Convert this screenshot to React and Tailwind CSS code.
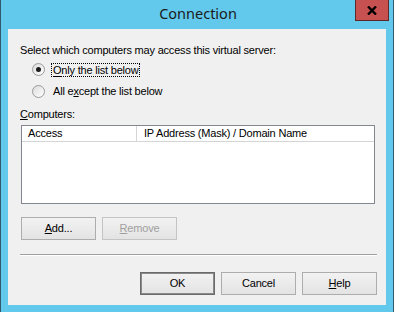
import React from 'react'

const Radio = ({ checked }) => (
  <span className="relative w-[13px] h-[13px] rounded-full border border-[#9a9a9a] bg-gradient-to-br from-[#dcdcdc] to-white shrink-0 flex items-center justify-center">
    {checked && <span className="w-[5px] h-[5px] rounded-full bg-[#1a1a1a]" />}
  </span>
)

const Btn = ({ children, disabled, isDefault, w = 'w-[75px]' }) => (
  <div
    className={`${w} h-[23px] flex items-center justify-center border ${
      isDefault ? 'border-[#6a6a6a] shadow-[inset_0_0_0_1px_#8a8a8a]' : disabled ? 'border-[#c4c4c4]' : 'border-[#adadad]'
    } bg-gradient-to-b from-[#f2f2f2] to-[#e3e3e3] ${disabled ? 'text-[#a0a0a0]' : 'text-black'}`}
  >
    {children}
  </div>
)

export default function App() {
  return (
    <div className="w-[396px] h-[312px] bg-white overflow-hidden" style={{ fontFamily: '"Liberation Sans", Arial, sans-serif' }}>
      <div className="w-[394px] h-[312px] bg-[#62c9ec] border-x border-[#2f5a6e] flex flex-col">
        <div className="relative h-[29px] flex items-center justify-center">
          <span className="text-[14.5px] text-[#1a1a1a] pl-[2px] pb-[1px]" style={{ fontFamily: '"Noto Sans", "Open Sans", sans-serif' }}>
            Connection
          </span>
          <div className="absolute right-[4px] top-0 w-[34px] h-[21px] bg-[#c75050] border border-[#5a2a2a] border-t-0 flex items-center justify-center">
            <svg width="10" height="9" viewBox="0 0 10 9">
              <path d="M1 0.5 L9 8.5 M9 0.5 L1 8.5" stroke="#000" strokeWidth="2.4" />
            </svg>
          </div>
        </div>
        <div className="mx-[7px] h-[276px] bg-[#f0f0f0] text-[11px] tracking-[-0.2px] text-black flex flex-col pl-[12px] pr-[9px] pt-[15px]">
          <div className="leading-[13px]">Select which computers may access this virtual server:</div>
          <div className="mt-[5px] ml-[12px] flex items-center gap-[6px] h-[15px]">
            <Radio checked />
            <span className="border border-dotted border-black px-[1px] leading-[12px]"><u className="no-underline border-b border-black leading-[10px]">O</u>nly the list below</span>
          </div>
          <div className="mt-[7px] ml-[12px] flex items-center gap-[6px] h-[15px]">
            <Radio />
            <span className="px-[2px]">All e<u>x</u>cept the list below</span>
          </div>
          <div className="mt-[9px] leading-[13px]"><u>C</u>omputers:</div>
          <div className="mt-[4px] ml-[1px] w-[354px] h-[79px] border border-[#828790] bg-white flex flex-col">
            <div className="h-[16px] flex border-b border-[#d5d5d5] bg-white">
              <div className="w-[115px] border-r border-[#d5d5d5] pl-[6px] leading-[15px]">Access</div>
              <div className="pl-[7px] leading-[15px]">IP Address (Mask) / Domain Name</div>
            </div>
          </div>
          <div className="mt-[13px] ml-[1px] flex gap-[6px]">
            <Btn><span><u>A</u>dd...</span></Btn>
            <Btn disabled><span><u>R</u>emove</span></Btn>
          </div>
          <div className="mt-[14px] w-[357px] h-[2px] border-t border-[#a0a0a0] border-b border-b-white" />
          <div className="mt-[16px] flex justify-end gap-[6px]">
            <Btn isDefault>OK</Btn>
            <Btn>Cancel</Btn>
            <Btn><span><u>H</u>elp</span></Btn>
          </div>
        </div>
      </div>
    </div>
  )
}
